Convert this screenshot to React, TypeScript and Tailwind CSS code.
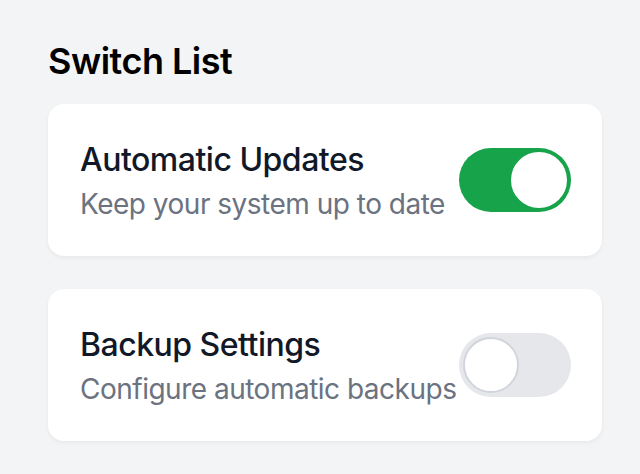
import { useState } from 'react';

type Item = { id: string; title: string; desc: string; on: boolean };

const initial: Item[] = [
  { id: 'updates', title: 'Automatic Updates', desc: 'Keep your system up to date', on: true },
  { id: 'backup', title: 'Backup Settings', desc: 'Configure automatic backups', on: false },
];

function Toggle({ on, onChange }: { on: boolean; onChange: () => void }) {
  return (
    <button
      type="button"
      role="switch"
      aria-checked={on}
      onClick={onChange}
      className={`relative shrink-0 w-[112px] h-[64px] rounded-full transition-colors ${
        on ? 'bg-[#16a34a]' : 'bg-[#e5e7eb]'
      }`}
    >
      <span
        className={`absolute top-[4px] left-[4px] w-[56px] h-[56px] rounded-full bg-white border-2 transition-transform ${
          on ? 'translate-x-[48px] border-white' : 'translate-x-0 border-[#d1d5db]'
        }`}
      />
    </button>
  );
}

export default function App() {
  const [items, setItems] = useState(initial);

  const flip = (id: string) =>
    setItems((prev) => prev.map((it) => (it.id === id ? { ...it, on: !it.on } : it)));

  return (
    <div className="min-h-screen bg-[#f3f4f6] pl-[48px] pr-[38px] pt-[33px] font-['Inter',sans-serif] tracking-[-0.5px]">
      <h2 className="text-[36px] leading-[56px] font-semibold text-black mb-[15px]">Switch List</h2>

      <div className="flex flex-col gap-[33px]">
        {items.map((it) => (
          <div
            key={it.id}
            className="flex items-center justify-between bg-white rounded-[16px] p-[32px] pr-[31px] shadow-[0_2px_4px_rgba(0,0,0,0.05)]"
          >
            <div className="whitespace-nowrap">
              <p className="text-[32px] leading-[48px] font-medium text-[#111827]">{it.title}</p>
              <p className="text-[28px] leading-[40px] text-[#6b7280]">{it.desc}</p>
            </div>
            <Toggle on={it.on} onChange={() => flip(it.id)} />
          </div>
        ))}
      </div>
    </div>
  );
}
